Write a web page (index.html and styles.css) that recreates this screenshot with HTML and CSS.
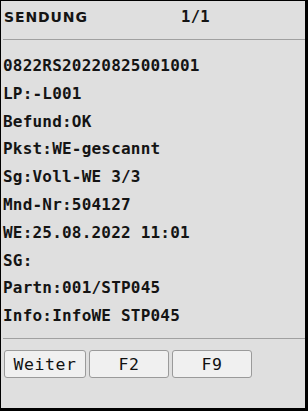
FILE: index.html
```html
<!DOCTYPE html>
<html lang="de">
<head>
  <meta charset="UTF-8">
  <title>Sendung</title>
  <link rel="stylesheet" href="styles.css">
</head>
<body>
  <div class="screen">
    <div class="head">
      <span class="title">SENDUNG</span>
      <span class="page">1/1</span>
    </div>

    <div class="lines">
      <div>0822RS20220825001001</div>
      <div>LP:-L001</div>
      <div>Befund:OK</div>
      <div>Pkst:WE-gescannt</div>
      <div>Sg:Voll-WE 3/3</div>
      <div>Mnd-Nr:504127</div>
      <div>WE:25.08.2022 11:01</div>
      <div>SG:</div>
      <div>Partn:001/STP045</div>
      <div>Info:InfoWE STP045</div>
    </div>

    <div class="keys">
      <button class="wide">Weiter</button>
      <button>F2</button>
      <button>F9</button>
    </div>
  </div>
</body>
</html>
```

FILE: styles.css
```css
body {
  margin: 0;
  background: #000;
}
.screen {
  width: 308px;
  height: 411px;
  box-sizing: border-box;
  border-style: solid;
  border-color: #000;
  border-width: 1px 3px 3px 1px;
  background: #dfdfdf;
  color: #141414;
}
.head {
  height: 39px;
  box-sizing: border-box;
  margin-left: 2px;
  padding: 0 0 7px 1px;
  display: flex;
  align-items: center;
  border-bottom: 1px solid #a0a0a0;
}
.title {
  font-family: "DejaVu Sans", sans-serif;
  font-weight: bold;
  font-size: 14px;
  letter-spacing: 0.9px;
  width: 177px;
}
.page {
  font-family: "DejaVu Sans Mono", monospace;
  font-weight: bold;
  font-size: 15.5px;
  letter-spacing: 0.3px;
}
.lines {
  height: 299px;
  box-sizing: border-box;
  margin-left: 2px;
  padding-top: 12px;
  border-bottom: 1px solid #a0a0a0;
  font-family: "DejaVu Sans Mono", monospace;
  font-weight: bold;
  font-size: 16px;
  letter-spacing: 0.2px;
  line-height: 27.8px;
}
.keys {
  display: flex;
  gap: 3px;
  padding: 11px 0 0 3px;
}
.keys button {
  width: 80px;
  height: 28px;
  padding: 0;
  background: #f0f0f0;
  border: 1px solid #9a9a9a;
  border-radius: 3px;
  font-family: "DejaVu Sans Mono", monospace;
  font-size: 16.5px;
  letter-spacing: 0.6px;
  color: #111;
}
.keys .wide { width: 82px; }
```
